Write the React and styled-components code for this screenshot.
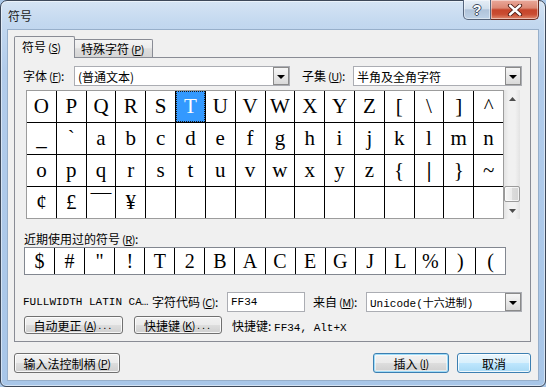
import React from 'react'
import styled, { createGlobalStyle, css } from 'styled-components'

const cjk = `"Noto Sans CJK SC", "Noto Sans", sans-serif`
const mono = `"Liberation Mono", "Noto Sans CJK SC", monospace`
const serif = `"Liberation Serif", "DejaVu Serif", serif`

const GlobalStyle = createGlobalStyle`
  html, body {
    margin: 0;
    padding: 0;
  }
  body {
    width: 546px;
    height: 387px;
    overflow: hidden;
    background: #a9c7e8;
    font-family: ${cjk};
    font-size: 12px;
    color: #000;
  }
  * {
    box-sizing: border-box;
  }
`

const GRID = [
  ['O', 'P', 'Q', 'R', 'S', 'T', 'U', 'V', 'W', 'X', 'Y', 'Z', '[', '\\', ']', '^'],
  ['_', '`', 'a', 'b', 'c', 'd', 'e', 'f', 'g', 'h', 'i', 'j', 'k', 'l', 'm', 'n'],
  ['o', 'p', 'q', 'r', 's', 't', 'u', 'v', 'w', 'x', 'y', 'z', '{', '|', '}', '~'],
  ['¢', '£', '￣', '¥', '', '', '', '', '', '', '', '', '', '', '', ''],
]

const RECENT = ['$', '#', '"', '!', 'T', '2', 'B', 'A', 'C', 'E', 'G', 'J', 'L', '%', ')', '(']

const Key = ({ c }) => (
  <Mn>
    (<u>{c}</u>)
  </Mn>
)

export default function App() {
  return (
    <>
      <GlobalStyle />
      <Window>
        <TitleBar>
          <Title>符号</Title>
          <Caption>
            <CaptionButton>
              <HelpGlyph>?</HelpGlyph>
            </CaptionButton>
            <CaptionButton $close>
              <svg width="16" height="12" viewBox="0 0 16 12">
                <path d="M3 1.5 L13 10.5 M13 1.5 L3 10.5" stroke="#4a1a12" strokeWidth="4.2" strokeLinecap="round" />
                <path d="M3 1.5 L13 10.5 M13 1.5 L3 10.5" stroke="#fff" strokeWidth="2.4" strokeLinecap="round" />
              </svg>
            </CaptionButton>
          </Caption>
        </TitleBar>

        <Client>
          <TabStrip>
            <Tab $active>
              符号<Key c="S" />
            </Tab>
            <Tab>
              特殊字符<Key c="P" />
            </Tab>
          </TabStrip>

          <Panel>
            <FieldRow>
              <Label $w={51}>字体<Key c="F" />:</Label>
              <Select $w={216}>
                <SelectValue>(普通文本)</SelectValue>
                <DropButton><Arrow /></DropButton>
              </Select>
              <Label $w={51} $ml={12}>子集<Key c="U" />:</Label>
              <Select $w={169}>
                <SelectValue>半角及全角字符</SelectValue>
                <DropButton><Arrow /></DropButton>
              </Select>
            </FieldRow>

            <GridWrap>
              <CharGrid>
                {GRID.flat().map((ch, i) => (
                  <Cell key={i} $sel={i === 5} $cjk={ch === '￣'} $heavy={ch === '|'}>
                    {ch}
                  </Cell>
                ))}
              </CharGrid>
              <ScrollBar>
                <ScrollArrow>
                  <svg width="7" height="4" viewBox="0 0 7 4"><path d="M0 4 L3.5 0 L7 4 Z" fill="#4d4d4d" /></svg>
                </ScrollArrow>
                <Track>
                  <Thumb />
                </Track>
                <ScrollArrow>
                  <svg width="7" height="4" viewBox="0 0 7 4"><path d="M0 0 L7 0 L3.5 4 Z" fill="#4d4d4d" /></svg>
                </ScrollArrow>
              </ScrollBar>
            </GridWrap>

            <RecentLabel>近期使用过的符号<Key c="R" />:</RecentLabel>
            <RecentRow>
              {RECENT.map((ch, i) => (
                <RecentCell key={i}>{ch}</RecentCell>
              ))}
            </RecentRow>

            <InfoRow>
              <CharName>FULLWIDTH LATIN CA…</CharName>
              <Label $w={75}>字符代码<Key c="C" />:</Label>
              <Input $w={78}>FF34</Input>
              <Label $w={53} $ml={8}>来自<Key c="M" />:</Label>
              <Select $w={156}>
                <SelectValue $mono>Unicode(十六进制)</SelectValue>
                <DropButton><Arrow /></DropButton>
              </Select>
            </InfoRow>

            <ButtonRow>
              <Button $w={99} $h={18} $ml={9}>
                自动更正<Key c="A" /><Dots>...</Dots>
              </Button>
              <Button $w={88} $h={18} $ml={11}>
                快捷键<Key c="K" /><Dots>...</Dots>
              </Button>
              <Shortcut>
                快捷键: <MonoText>FF34, Alt+X</MonoText>
              </Shortcut>
            </ButtonRow>
          </Panel>

          <DialogButtons>
            <Button $w={106}>
              输入法控制柄<Key c="P" />
            </Button>
            <Spacer />
            <Button $w={76} $variant="default">
              插入<Key c="I" />
            </Button>
            <Button $w={74} $variant="hot">
              取消
            </Button>
          </DialogButtons>
        </Client>
      </Window>
    </>
  )
}

const Window = styled.div`
  width: 546px;
  height: 387px;
  display: flex;
  flex-direction: column;
  padding: 0 6px 5px;
  border: 1px solid #3d4859;
  border-radius: 7px 7px 6px 6px;
  background: linear-gradient(180deg, #d5e4f4 0px, #c3d8ef 22px, #b2cceb 70px, #a8c6e8 100%);
  box-shadow: inset 0 0 0 1px rgba(255, 255, 255, 0.5);
`

const TitleBar = styled.div`
  flex: none;
  height: 28px;
  display: flex;
  align-items: flex-start;
  justify-content: space-between;
`

const Title = styled.div`
  padding: 7px 0 0 1px;
  line-height: 16px;
  font-size: 12px;
  color: #1c1c1c;
`

const Caption = styled.div`
  display: flex;
  margin-top: -1px;
`

const CaptionButton = styled.div`
  height: 20px;
  display: flex;
  align-items: center;
  justify-content: center;
  border: 1px solid #56657c;
  border-top: none;
  box-shadow: inset 0 0 0 1px rgba(255, 255, 255, 0.45);
  ${(p) =>
    p.$close
      ? css`
          width: 48px;
          border-left: none;
          border-color: #6a2a1f;
          border-radius: 0 0 5px 0;
          background: linear-gradient(180deg, #eaa99b 0%, #dc8874 42%, #c6452b 52%, #c94c31 75%, #e08a6f 100%);
        `
      : css`
          width: 28px;
          border-radius: 0 0 0 5px;
          background: linear-gradient(180deg, #e6eef7 0%, #d2dfec 45%, #b0c3da 52%, #bed2e7 100%);
        `}
`

const HelpGlyph = styled.span`
  font-family: "Liberation Sans", sans-serif;
  font-weight: 700;
  font-size: 14px;
  line-height: 14px;
  color: #fff;
  text-shadow: 1px 0 0 #3f4d62, -1px 0 0 #3f4d62, 0 1px 0 #3f4d62, 0 -1px 0 #3f4d62;
`

const Client = styled.div`
  flex: 1;
  display: flex;
  flex-direction: column;
  padding: 0 7px 0 6px;
  background: #f0f0f0;
  border: 1px solid #97afca;
`

const TabStrip = styled.div`
  display: flex;
  align-items: flex-end;
  height: 22px;
  margin: 6px 0 -1px;
`

const Tab = styled.div`
  display: flex;
  align-items: center;
  white-space: nowrap;
  border: 1px solid #898c95;
  border-bottom: none;
  ${(p) =>
    p.$active
      ? css`
          position: relative;
          z-index: 1;
          width: 61px;
          height: 22px;
          padding: 0 0 2px 7px;
          border-radius: 2px 2px 0 0;
          background: #f0f0f0;
        `
      : css`
          width: 78px;
          height: 18px;
          margin-bottom: 1px;
          padding-left: 6px;
          border-left: none;
          border-radius: 0 2px 0 0;
          background: linear-gradient(180deg, #f4f4f4 0%, #ececec 45%, #dedede 52%, #d5d5d5 100%);
        `}
`

const Mn = styled.span`
  margin-left: 2px;
  font-size: 11px;
  letter-spacing: -0.5px;

  u {
    text-decoration: underline;
    text-underline-offset: 1px;
  }
`

const Panel = styled.div`
  width: 517px;
  height: 285px;
  display: flex;
  flex-direction: column;
  border: 1px solid #898c95;
  background: #f0f0f0;
`

const FieldRow = styled.div`
  display: flex;
  align-items: center;
  height: 20px;
  margin-top: 8px;
  padding-left: 8px;
`

const Label = styled.div`
  flex: none;
  width: ${(p) => p.$w}px;
  margin-left: ${(p) => p.$ml || 0}px;
  white-space: nowrap;
  line-height: 16px;
`

const Select = styled.div`
  flex: none;
  width: ${(p) => p.$w}px;
  height: 20px;
  display: flex;
  align-items: center;
  padding-left: 3px;
  background: #fff;
  border: 1px solid #abadb3;
`

const SelectValue = styled.div`
  flex: 1;
  white-space: nowrap;
  overflow: hidden;
  font-family: ${(p) => (p.$mono ? mono : cjk)};
  font-size: ${(p) => (p.$mono ? 11 : 12)}px;
`

const DropButton = styled.div`
  flex: none;
  width: 16px;
  height: 18px;
  display: flex;
  align-items: center;
  justify-content: center;
  border: 1px solid #8a8a8a;
  background: linear-gradient(180deg, #f6f6f6 0%, #e8e8e8 50%, #d9d9d9 100%);
`

const Arrow = styled.span`
  width: 0;
  height: 0;
  border-left: 4px solid transparent;
  border-right: 4px solid transparent;
  border-top: 4px solid #000;
  margin-top: 1px;
`

const GridWrap = styled.div`
  display: flex;
  margin: 4px 0 0 11px;
`

const CharGrid = styled.div`
  width: 478px;
  display: grid;
  grid-template-columns: repeat(16, 1fr);
  grid-auto-rows: 31px;
  gap: 1px;
  background: #000;
  border: 1px solid #9c9c9c;
`

const Cell = styled.div`
  display: flex;
  align-items: center;
  justify-content: center;
  background: ${(p) => (p.$sel ? '#3399ff' : '#fff')};
  color: ${(p) => (p.$sel ? '#fff' : '#000')};
  font-family: ${(p) => (p.$cjk ? cjk : serif)};
  font-size: 21px;
  font-weight: ${(p) => (p.$heavy ? 700 : 400)};
  line-height: 1;
  ${(p) =>
    p.$sel &&
    css`
      outline: 1px dotted #1a1a1a;
      outline-offset: -1px;
    `}
`

const ScrollBar = styled.div`
  width: 16px;
  display: flex;
  flex-direction: column;
  background: linear-gradient(90deg, #e3e3e3 0%, #f1f1f1 30%, #f1f1f1 70%, #e3e3e3 100%);
`

const ScrollArrow = styled.div`
  height: 17px;
  display: flex;
  align-items: center;
  justify-content: center;
`

const Track = styled.div`
  flex: 1;
  display: flex;
  flex-direction: column;
  justify-content: flex-end;
`

const Thumb = styled.div`
  height: 16px;
  border: 1px solid #9a9a9a;
  border-radius: 2px;
  background: linear-gradient(90deg, #f6f6f6 0%, #ececec 50%, #dcdcdc 52%, #d4d4d4 100%);
  box-shadow: inset 0 0 0 1px rgba(255, 255, 255, 0.7);
`

const RecentLabel = styled.div`
  margin: 13px 0 1px 9px;
  line-height: 14px;
  white-space: nowrap;
`

const RecentRow = styled.div`
  width: 482px;
  height: 28px;
  margin-left: 9px;
  display: grid;
  grid-template-columns: repeat(16, 1fr);
  gap: 1px;
  background: #000;
  border: 1px solid #828790;
`

const RecentCell = styled.div`
  display: flex;
  align-items: center;
  justify-content: center;
  background: #fff;
  font-family: ${serif};
  font-size: 20px;
  line-height: 1;
`

const InfoRow = styled.div`
  display: flex;
  align-items: center;
  height: 20px;
  margin-top: 17px;
  padding-left: 8px;
`

const CharName = styled.div`
  flex: none;
  width: 129px;
  font-family: ${mono};
  font-size: 11px;
  white-space: nowrap;
`

const Input = styled.div`
  flex: none;
  width: ${(p) => p.$w}px;
  height: 20px;
  display: flex;
  align-items: center;
  padding-left: 3px;
  background: #fff;
  border: 1px solid #abadb3;
  font-family: ${mono};
  font-size: 11px;
`

const ButtonRow = styled.div`
  display: flex;
  align-items: center;
  margin-top: 4px;
`

const Button = styled.div`
  flex: none;
  width: ${(p) => p.$w}px;
  height: ${(p) => p.$h || 20}px;
  margin-left: ${(p) => p.$ml || 0}px;
  display: flex;
  align-items: center;
  justify-content: center;
  white-space: nowrap;
  border: 1px solid #707070;
  border-radius: 3px;
  background: linear-gradient(180deg, #f2f2f2 0%, #ebebeb 48%, #dddddd 52%, #cfcfcf 100%);
  box-shadow: inset 0 0 0 1px rgba(255, 255, 255, 0.8);
  ${(p) =>
    p.$variant === 'default' &&
    css`
      border-color: #3c7fb1;
      box-shadow: inset 0 0 0 1px #9fdcf8, inset 0 0 0 2px rgba(255, 255, 255, 0.5);
    `}
  ${(p) =>
    p.$variant === 'hot' &&
    css`
      margin-left: 8px;
      border-color: #3c7fb1;
      background: linear-gradient(180deg, #eaf6fd 0%, #d9f0fc 48%, #bee6fd 52%, #a7d9f5 100%);
    `}
`

const Dots = styled.span`
  margin-left: 2px;
  letter-spacing: 2px;
  font-family: "Liberation Sans", sans-serif;
  font-size: 11px;
`

const Shortcut = styled.div`
  margin-left: 10px;
  white-space: nowrap;
`

const MonoText = styled.span`
  font-family: ${mono};
  font-size: 11px;
`

const DialogButtons = styled.div`
  display: flex;
  margin-top: 11px;
`

const Spacer = styled.div`
  flex: 1;
`
